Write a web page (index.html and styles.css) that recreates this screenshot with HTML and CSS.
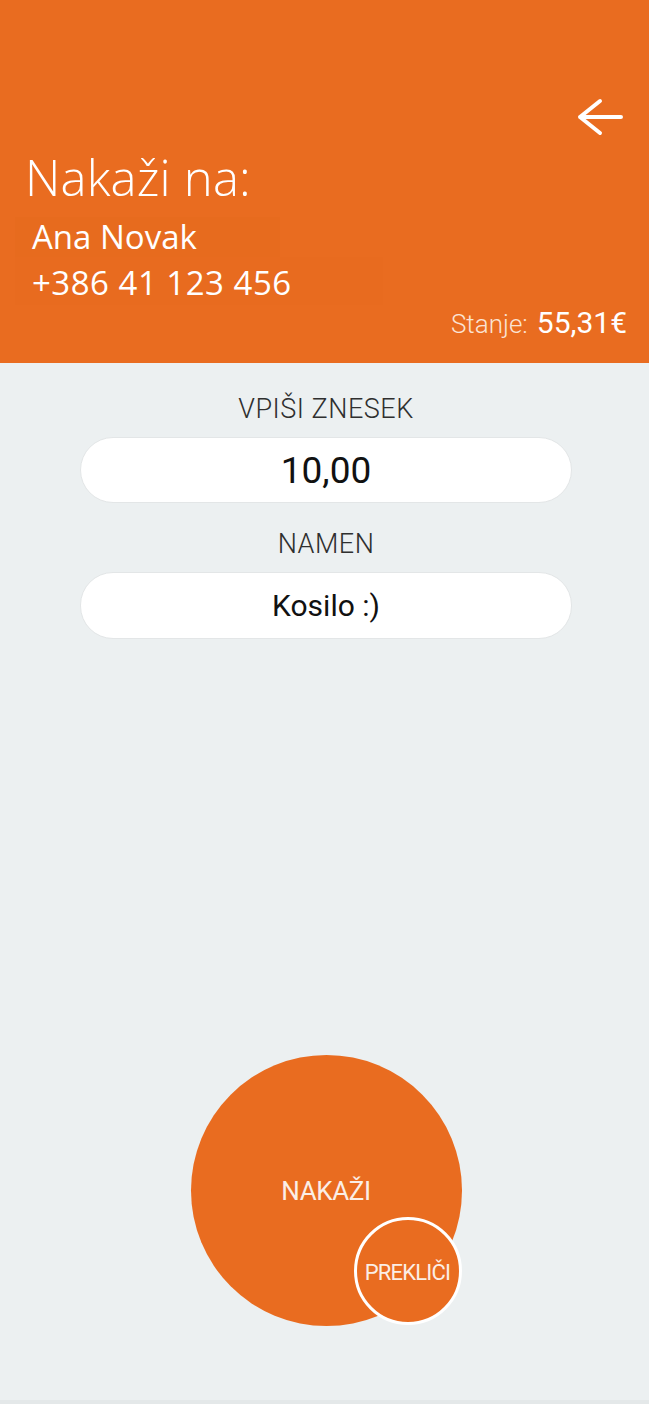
FILE: index.html
```html
<!DOCTYPE html>
<html lang="sl">
<head>
<meta charset="utf-8">
<title>Nakaži</title>
<link rel="stylesheet" href="styles.css">
</head>
<body>
<div class="screen">
  <header class="header">
    <div class="top-row">
      <svg class="back" width="48" height="40" viewBox="0 0 48 40" aria-label="Nazaj">
        <path d="M46 19 H5 M25 3 L5 19 L25 35" fill="none" stroke="#fff" stroke-width="4" stroke-linecap="round" stroke-linejoin="round"/>
      </svg>
    </div>
    <h1 class="title">Nakaži na:</h1>
    <div class="name-box">Ana Novak</div>
    <div class="phone-box">+386 41 123 456</div>
    <div class="balance">
      <span class="balance-label">Stanje:</span>
      <span class="balance-value">55,31€</span>
    </div>
  </header>

  <main class="content">
    <div class="label">VPIŠI ZNESEK</div>
    <div class="field field-amount">10,00</div>
    <div class="label label-second">NAMEN</div>
    <div class="field field-purpose">Kosilo :)</div>

    <div class="actions">
      <div class="btn-main">NAKAŽI
        <div class="btn-cancel">PREKLIČI</div>
      </div>
    </div>
  </main>
</div>
</body>
</html>
```

FILE: styles.css
```css
* { box-sizing: border-box; }

html, body {
  margin: 0;
  padding: 0;
}

body {
  background: #ecf0f1;
  font-family: Roboto, "Open Sans", "Liberation Sans", sans-serif;
}

.screen {
  width: 649px;
  min-height: 1404px;
  display: flex;
  flex-direction: column;
}

/* ---------- header ---------- */
.header {
  height: 363px;
  background: #e96c20;
  color: #fff;
  padding: 0 22px 27px 25px;
  display: flex;
  flex-direction: column;
  font-family: "Open Sans", "Liberation Sans", sans-serif;
}

.top-row {
  margin-top: 98px;
  height: 40px;
  display: flex;
  justify-content: flex-end;
}

.back {
  display: block;
  margin-right: 4px;
}

.title {
  margin: 11px 0 0 0;
  font-size: 49px;
  line-height: 56px;
  font-weight: 300;
  letter-spacing: 0.2px;
}

.name-box {
  margin: 12px 0 0 -10px;
  width: 265px;
  padding-left: 17px;
  height: 40px;
  font-size: 33px;
  line-height: 40px;
  background: #e76b1e;
}

.phone-box {
  margin-left: -10px;
  width: 368px;
  padding-left: 17px;
  height: 48px;
  font-size: 33px;
  line-height: 52px;
  letter-spacing: 0.5px;
  background: #e86b1f;
}

.balance {
  margin-top: auto;
  display: flex;
  justify-content: flex-end;
  align-items: baseline;
  gap: 9px;
  font-family: Roboto, "Liberation Sans", sans-serif;
  line-height: 36px;
}

.balance-label {
  font-size: 26px;
  font-weight: 300;
  color: #fbe3d3;
}

.balance-value {
  font-size: 30px;
  font-weight: 400;
}

/* ---------- content ---------- */
.content {
  flex: 1;
  display: flex;
  flex-direction: column;
  align-items: center;
  padding: 30px 0 74px 3px;
  border-bottom: 4px solid #e4e8e9;
}

.label {
  font-size: 27px;
  line-height: 32px;
  font-weight: 300;
  color: #2f2f2f;
  letter-spacing: 0.5px;
}

.label-second {
  margin-top: 25px;
}

.field {
  margin-top: 12px;
  width: 492px;
  height: 66px;
  border-radius: 33px;
  background: #fff;
  border: 1px solid #e3e6e7;
  display: flex;
  align-items: center;
  justify-content: center;
  color: #111;
}

.field-amount {
  font-size: 37px;
}

.field-purpose {
  font-size: 30px;
  height: 67px;
}

.actions {
  margin-top: auto;
  display: flex;
  justify-content: center;
}

.btn-main {
  position: relative;
  width: 271px;
  height: 271px;
  border-radius: 50%;
  background: #e96c20;
  color: #fbeee6;
  display: flex;
  align-items: center;
  justify-content: center;
  font-size: 26px;
  letter-spacing: -0.4px;
}

.btn-cancel {
  position: absolute;
  left: 163px;
  top: 162px;
  width: 108px;
  height: 108px;
  border-radius: 50%;
  border: 3px solid #fff;
  background: #e96c20;
  color: #fbeee6;
  display: flex;
  align-items: center;
  justify-content: center;
  font-size: 22px;
  letter-spacing: -0.8px;
  padding-top: 3px;
}
```
